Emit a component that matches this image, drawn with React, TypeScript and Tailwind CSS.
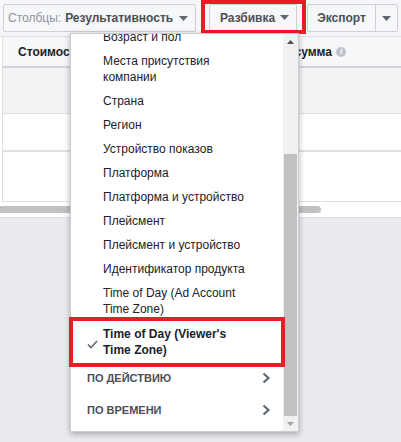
import React from "react";

const font = { fontFamily: '"Liberation Sans", Arial, sans-serif' };

function Tri({ color = "#606770" }: { color?: string }) {
  return (
    <svg width="9" height="5" viewBox="0 0 9 5" className="shrink-0">
      <polygon points="0,0 9,0 4.5,5" fill={color} />
    </svg>
  );
}

function Chevron() {
  return (
    <svg width="9" height="12" viewBox="0 0 9 12" className="shrink-0">
      <polyline points="1.5,1.5 6.5,6 1.5,10.5" fill="none" stroke="#606770" strokeWidth="2.2" />
    </svg>
  );
}

const items: string[][] = [
  ["Возраст и пол"],
  ["Места присутствия", "компании"],
  ["Страна"],
  ["Регион"],
  ["Устройство показов"],
  ["Платформа"],
  ["Платформа и устройство"],
  ["Плейсмент"],
  ["Плейсмент и устройство"],
  ["Идентификатор продукта"],
  ["Time of Day (Ad Account", "Time Zone)"],
];

export default function App() {
  return (
    <div className="relative w-[401px] h-[442px] overflow-hidden bg-[#e9ebee]" style={font}>
      {/* Top toolbar */}
      <div className="h-[37px] bg-[#f5f6f7] border-b border-[#dddfe2] flex items-start pt-[4px] pl-[3px] text-[12px]">
        <div className="w-[193px] h-[28px] border border-[#ced0d4] bg-[#f6f7f9] rounded-[2px] flex items-center pl-[4px] gap-[6px]">
          <span className="text-[#90949c]">Столбцы:</span>
          <span className="font-bold text-[#4b4f56] -ml-[2px]">Результативность</span>
          <Tri />
        </div>
        <div className="ml-[13px] w-[88px] h-[27px] border border-[#ced0d4] bg-[#f6f7f9] rounded-[2px] flex items-center pl-[10px] gap-[5px]">
          <span className="font-bold text-[#4b4f56]">Разбивка</span>
          <Tri />
        </div>
        <div className="ml-[10px] h-[28px] flex border border-[#ced0d4] bg-[#f6f7f9] rounded-[2px]">
          <div className="w-[68px] flex items-center justify-center font-bold text-[#4b4f56] border-r border-[#ced0d4]">
            Экспорт
          </div>
          <div className="w-[21px] flex items-center justify-center">
            <Tri />
          </div>
        </div>
      </div>

      {/* Table */}
      <div className="bg-white">
        <div className="h-[31px] bg-[#f6f7f9] border-b-2 border-[#d3d5d9] border-l border-l-[#dddfe2] ml-[2px] flex items-center text-[12px] font-bold text-[#1d2129]">
          <div className="pl-[15px] w-[200px]">Стоимость</div>
          <div className="w-[143px] flex items-center justify-end gap-[4px]">
            <span>Потраченная сумма</span>
            <span className="w-[10px] h-[10px] rounded-full bg-[#bec2c9] text-white text-[8px] leading-[10px] text-center italic">i</span>
          </div>
        </div>
        <div className="h-[46px] bg-[#f2f3f5] border-b border-[#dddfe2] border-l border-l-[#dddfe2] ml-[2px]" />
        <div className="h-[38px] bg-white border-b-2 border-[#dddfe2] border-l border-l-[#dddfe2] ml-[2px]" />
        <div className="h-[50px] bg-white border-b border-[#dddfe2] border-l border-l-[#dddfe2] ml-[2px]" />
        <div className="h-[16px] bg-white border-b border-[#dddfe2] flex items-center">
          <div className="w-[321px] h-[7px] bg-[#c1c1c1] rounded-r-full" />
        </div>
      </div>

      {/* Red annotation around Разбивка */}
      <div className="absolute left-[201px] top-0 w-[105px] h-[34px] border-[4px] border-[#ed1c24]" />

      {/* Dropdown */}
      <div className="absolute left-[70px] top-[33px] w-[229px] h-[399px] bg-white border border-[#c9ccd1] shadow-[0_2px_6px_rgba(0,0,0,0.3)] flex overflow-hidden">
        <div className="flex-1 overflow-hidden">
          <div className="-mt-[9px] text-[12px] text-[#1d2129]">
            {items.map((lines, i) => (
              <div key={i} className="py-[4px] pl-[32px] leading-[16px]">
                {lines.map((l, j) => (
                  <div key={j}>{l}</div>
                ))}
              </div>
            ))}
            <div className="relative py-[4px] pl-[32px] leading-[16px] font-bold mt-[1px]">
              <svg width="11" height="9" viewBox="0 0 11 9" className="absolute left-[16px] top-[18px]">
                <polyline points="1,4.5 4,7.5 10,1" fill="none" stroke="#606770" strokeWidth="1.6" />
              </svg>
              <div>Time of Day (Viewer's</div>
              <div>Time Zone)</div>
            </div>
            <div className="h-[32px] flex items-center justify-between pl-[16px] pr-[12px] text-[11px] font-bold text-[#4b4f56]">
              <span>ПО ДЕЙСТВИЮ</span>
              <Chevron />
            </div>
            <div className="h-[32px] flex items-center justify-between pl-[16px] pr-[12px] text-[11px] font-bold text-[#4b4f56]">
              <span>ПО ВРЕМЕНИ</span>
              <Chevron />
            </div>
          </div>
        </div>
        {/* scrollbar */}
        <div className="w-[15px] bg-[#f1f1f1] flex flex-col items-center">
          <div className="h-[14px] flex items-center justify-center pt-[2px]">
            <svg width="7" height="4" viewBox="0 0 7 4">
              <polygon points="0,4 7,4 3.5,0" fill="#505050" />
            </svg>
          </div>
          <div className="mt-[106px] w-[13px] h-[262px] bg-[#c1c1c1]" />
          <div className="flex-1 flex items-center justify-center">
            <svg width="7" height="4" viewBox="0 0 7 4">
              <polygon points="0,0 7,0 3.5,4" fill="#a3a3a3" />
            </svg>
          </div>
        </div>
      </div>

      {/* Red annotation around selected item */}
      <div className="absolute left-[69px] top-[317px] w-[216px] h-[50px] border-[4px] border-[#ed1c24]" />
    </div>
  );
}
